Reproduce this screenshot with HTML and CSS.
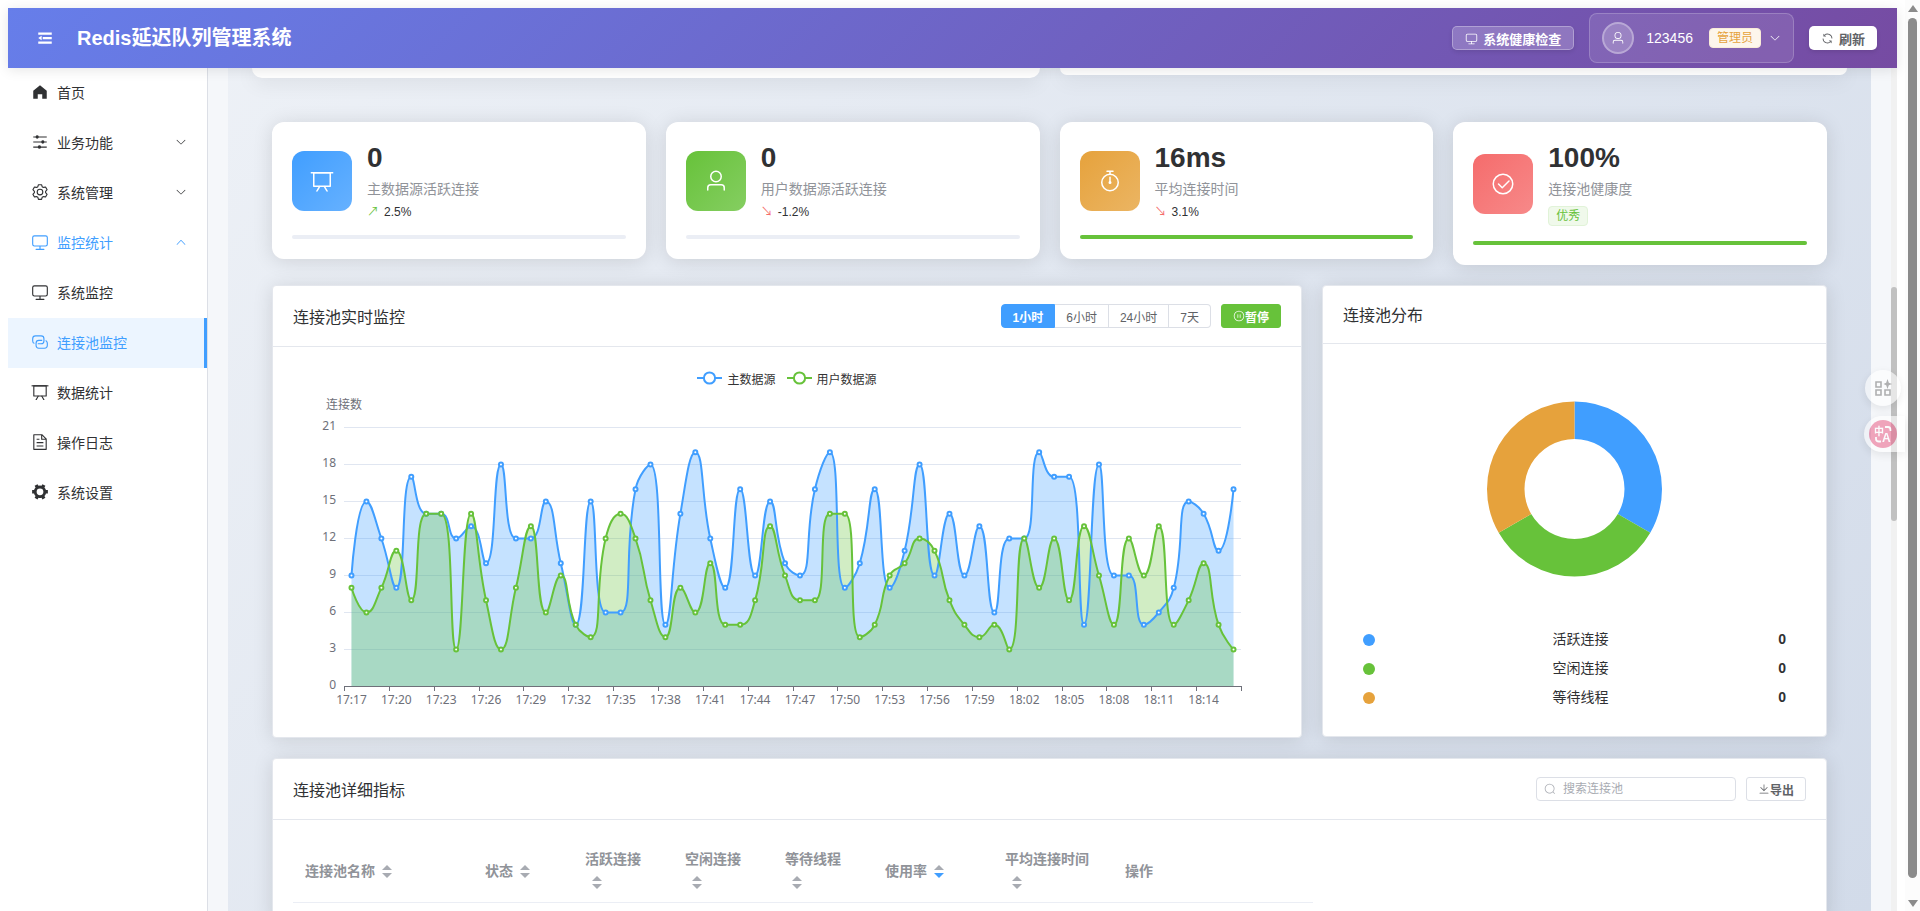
FILE: index.html
```html
<!DOCTYPE html>
<html lang="zh-CN">
<head>
<meta charset="utf-8">
<title>Redis延迟队列管理系统</title>
<link rel="stylesheet" href="styles.css">
</head>
<body>
<svg class="sprite" aria-hidden="true">
  <symbol id="i-fold" viewBox="0 0 1024 1024"><path d="M896 192H128v128h768zm0 256H384v128h512zm0 256H128v128h768zM320 384 128 512l192 128z"/></symbol>
  <symbol id="i-monitor" viewBox="0 0 1024 1024"><path d="M544 768v128h192a32 32 0 1 1 0 64H288a32 32 0 1 1 0-64h192V768H192A128 128 0 0 1 64 640V256a128 128 0 0 1 128-128h640a128 128 0 0 1 128 128v384a128 128 0 0 1-128 128H544zM192 192a64 64 0 0 0-64 64v384a64 64 0 0 0 64 64h640a64 64 0 0 0 64-64V256a64 64 0 0 0-64-64H192z"/></symbol>
  <symbol id="i-down" viewBox="0 0 1024 1024"><path d="M831.872 340.864 512 652.672 192.128 340.864a30.592 30.592 0 0 0-42.752 0 29.12 29.12 0 0 0 0 41.6L489.664 714.24a32 32 0 0 0 44.672 0l340.288-331.712a29.12 29.12 0 0 0 0-41.728 30.592 30.592 0 0 0-42.752 0z"/></symbol>
  <symbol id="i-up" viewBox="0 0 1024 1024"><path d="m488.832 344.32-339.84 356.672a32 32 0 0 0 0 44.16l.384.384a29.44 29.44 0 0 0 42.688 0l320-335.872 319.872 335.872a29.44 29.44 0 0 0 42.688 0l.384-.384a32 32 0 0 0 0-44.16L535.168 344.32a32 32 0 0 0-46.336 0z"/></symbol>
  <symbol id="i-home" viewBox="0 0 1024 1024"><path d="M512 128 128 447.936V896h255.936V640H640v256h255.936V447.936z"/></symbol>
  <symbol id="i-operation" viewBox="0 0 1024 1024"><path d="M389.44 768a96.064 96.064 0 0 1 181.12 0H896v64H570.56a96.064 96.064 0 0 1-181.12 0H128v-64h261.44zm192-288a96.064 96.064 0 0 1 181.12 0H896v64H762.56a96.064 96.064 0 0 1-181.12 0H128v-64h453.44zm-320-288a96.064 96.064 0 0 1 181.12 0H896v64H442.56a96.064 96.064 0 0 1-181.12 0H128v-64h133.44z"/></symbol>
  <symbol id="i-setting" viewBox="0 0 1024 1024"><path d="M600.704 64a32 32 0 0 1 30.464 22.208l35.2 109.376c14.784 7.232 28.928 15.36 42.432 24.512l112.384-24.192a32 32 0 0 1 34.432 15.36L944.32 364.8a32 32 0 0 1-4.032 37.504l-77.12 85.12a357.12 357.12 0 0 1 0 49.024l77.12 85.248a32 32 0 0 1 4.032 37.504l-88.704 153.6a32 32 0 0 1-34.432 15.296L708.8 803.904c-13.44 9.088-27.648 17.28-42.368 24.512l-35.264 109.376A32 32 0 0 1 600.704 960H423.296a32 32 0 0 1-30.464-22.208L357.696 828.48a351.616 351.616 0 0 1-42.56-24.64l-112.32 24.256a32 32 0 0 1-34.432-15.36L79.68 659.2a32 32 0 0 1 4.032-37.504l77.12-85.248a357.12 357.12 0 0 1 0-48.896l-77.12-85.248A32 32 0 0 1 79.68 364.8l88.704-153.6a32 32 0 0 1 34.432-15.296l112.32 24.256c13.568-9.152 27.776-17.408 42.56-24.64l35.2-109.312A32 32 0 0 1 423.232 64H600.64zm-23.424 64H446.72l-36.352 113.088-24.512 11.968a294.113 294.113 0 0 0-34.816 20.096l-22.656 15.36-116.224-25.088-65.28 113.152 79.68 88.192-1.92 27.136a293.12 293.12 0 0 0 0 40.192l1.92 27.136-79.808 88.192 65.344 113.152 116.224-25.024 22.656 15.296a294.113 294.113 0 0 0 34.816 20.096l24.512 11.968L446.72 896h130.688l36.48-113.152 24.448-11.904a288.282 288.282 0 0 0 34.752-20.096l22.592-15.296 116.288 25.024 65.28-113.152-79.744-88.192 1.92-27.136a293.12 293.12 0 0 0 0-40.256l-1.92-27.136 79.808-88.128-65.344-113.152-116.288 24.96-22.592-15.232a287.616 287.616 0 0 0-34.752-20.096l-24.448-11.904L577.344 128zM512 320a192 192 0 1 1 0 384 192 192 0 0 1 0-384zm0 64a128 128 0 1 0 0 256 128 128 0 0 0 0-256z"/></symbol>
  <symbol id="i-connection" viewBox="0 0 1024 1024"><path d="M640 384v64H448a128 128 0 0 0-128 128v128a128 128 0 0 0 128 128h320a128 128 0 0 0 128-128V576a128 128 0 0 0-64-110.848V394.88c74.56 26.368 128 97.472 128 181.056v128a192 192 0 0 1-192 192H448a192 192 0 0 1-192-192V576a192 192 0 0 1 192-192h192z"/><path d="M384 640v-64h192a128 128 0 0 0 128-128V320a128 128 0 0 0-128-128H256a128 128 0 0 0-128 128v128a128 128 0 0 0 64 110.848v70.272A192.064 192.064 0 0 1 64 448V320a192 192 0 0 1 192-192h320a192 192 0 0 1 192 192v128a192 192 0 0 1-192 192H384z"/></symbol>
  <symbol id="i-board" viewBox="0 0 1024 1024"><path d="M32 128h960v64H32z"/><path d="M192 192v512h640V192H192zm-64-64h768v608a32 32 0 0 1-32 32H160a32 32 0 0 1-32-32V128z"/><path d="M322.176 960H248.32l144.64-250.56 55.424 32L322.176 960zm453.888 0h-73.856L576 741.44l55.424-32L776.064 960z"/></symbol>
  <symbol id="i-document" viewBox="0 0 1024 1024"><path d="M832 384H576V128H192v768h640V384zm-26.496-64L640 154.496V320h165.504zM160 64h480l256 256v608a32 32 0 0 1-32 32H160a32 32 0 0 1-32-32V96a32 32 0 0 1 32-32zm160 448h384v64H320v-64zm0-192h160v64H320v-64zm0 384h384v64H320v-64z"/></symbol>
  <symbol id="i-tools" viewBox="0 0 1024 1024"><path d="M764.416 254.72a351.68 351.68 0 0 1 86.336 149.184H960v192.064H850.752a351.68 351.68 0 0 1-86.336 149.312l54.72 94.72-166.272 96-54.592-94.72a352.64 352.64 0 0 1-172.48 0L371.136 936l-166.272-96 54.72-94.72a351.68 351.68 0 0 1-86.336-149.312H64v-192h109.248a351.68 351.68 0 0 1 86.336-149.312L204.8 160l166.208-96h.192l54.656 94.592a352.64 352.64 0 0 1 172.48 0L652.8 64h.128L819.2 160l-54.72 94.72zM704 499.968a192 192 0 1 0-384 0 192 192 0 0 0 384 0z"/></symbol>
  <symbol id="i-user" viewBox="0 0 1024 1024"><path d="M512 512a192 192 0 1 0 0-384 192 192 0 0 0 0 384zm0 64a256 256 0 1 1 0-512 256 256 0 0 1 0 512zm320 320v-96a96 96 0 0 0-96-96H288a96 96 0 0 0-96 96v96a32 32 0 1 1-64 0v-96a160 160 0 0 1 160-160h448a160 160 0 0 1 160 160v96a32 32 0 1 1-64 0z"/></symbol>
  <symbol id="i-timer" viewBox="0 0 1024 1024"><path d="M512 896a320 320 0 1 0 0-640 320 320 0 0 0 0 640zm0 64a384 384 0 1 1 0-768 384 384 0 0 1 0 768z"/><path d="M512 320a32 32 0 0 1 32 32l-.512 224a32 32 0 1 1-64 0L480 352a32 32 0 0 1 32-32z"/><path d="M448 576a64 64 0 1 0 128 0 64 64 0 1 0-128 0zm96-448v128h-64V128h-96a32 32 0 0 1 0-64h256a32 32 0 1 1 0 64h-96z"/></symbol>
  <symbol id="i-check" viewBox="0 0 1024 1024"><path d="M512 896a384 384 0 1 0 0-768 384 384 0 0 0 0 768zm0 64a448 448 0 1 1 0-896 448 448 0 0 1 0 896z"/><path d="M745.344 361.344a32 32 0 0 1 45.312 45.312l-288 288a32 32 0 0 1-45.312 0l-160-160a32 32 0 1 1 45.312-45.312L480 626.752l265.344-265.408z"/></symbol>
  <symbol id="i-pause" viewBox="0 0 1024 1024"><path d="M512 64a448 448 0 1 1 0 896 448 448 0 0 1 0-896zm0 832a384 384 0 0 0 0-768 384 384 0 0 0 0 768zm-96-544q32 0 32 32v256q0 32-32 32t-32-32V384q0-32 32-32zm192 0q32 0 32 32v256q0 32-32 32t-32-32V384q0-32 32-32z"/></symbol>
  <symbol id="i-refresh" viewBox="0 0 1024 1024"><path d="M771.776 794.88A384 384 0 0 1 128 512h64a320 320 0 0 0 555.712 216.448H654.72a32 32 0 1 1 0-64h149.056a32 32 0 0 1 32 32v148.928a32 32 0 1 1-64 0v-50.56zM276.288 295.616h92.992a32 32 0 0 1 0 64H220.16a32 32 0 0 1-32-32V178.56a32 32 0 0 1 64 0v50.56A384 384 0 0 1 896.128 512h-64a320 320 0 0 0-555.776-216.384z"/></symbol>
  <symbol id="i-search" viewBox="0 0 1024 1024"><path d="m795.904 750.72 124.992 124.928a32 32 0 0 1-45.248 45.248L750.656 795.904a416 416 0 1 1 45.248-45.248zM480 832a352 352 0 1 0 0-704 352 352 0 0 0 0 704z"/></symbol>
  <symbol id="i-download" viewBox="0 0 1024 1024"><path d="M160 832h704a32 32 0 1 1 0 64H160a32 32 0 1 1 0-64zm384-253.696 236.288-236.352 45.248 45.248L508.8 704 192 387.2l45.248-45.248L480 584.704V128h64v450.304z"/></symbol>
</svg>

<div class="window">
  <div class="app">
    <header class="topbar">
      <button class="fold" type="button" aria-label="折叠菜单"><svg class="icon"><use href="#i-fold"/></svg></button>
      <h1 class="brand">Redis延迟队列管理系统</h1>
      <button class="health" type="button"><svg class="icon"><use href="#i-monitor"/></svg>系统健康检查</button>
      <button class="account" type="button">
        <span class="avatar"><svg class="icon"><use href="#i-user"/></svg></span>
        <span class="account-name">123456</span>
        <span class="role">管理员</span>
        <svg class="icon account-arrow"><use href="#i-down"/></svg>
      </button>
      <button class="refresh" type="button"><svg class="icon"><use href="#i-refresh"/></svg>刷新</button>
    </header>

    <div class="layout">
      <nav class="sidebar">
        <a class="item" href="#"><svg class="icon"><use href="#i-home"/></svg><span>首页</span></a>
        <a class="item" href="#"><svg class="icon"><use href="#i-operation"/></svg><span>业务功能</span><svg class="arrow"><use href="#i-down"/></svg></a>
        <a class="item" href="#"><svg class="icon"><use href="#i-setting"/></svg><span>系统管理</span><svg class="arrow"><use href="#i-down"/></svg></a>
        <a class="item open" href="#"><svg class="icon"><use href="#i-monitor"/></svg><span>监控统计</span><svg class="arrow"><use href="#i-up"/></svg></a>
        <a class="item" href="#"><svg class="icon"><use href="#i-monitor"/></svg><span>系统监控</span></a>
        <a class="item active" href="#"><svg class="icon"><use href="#i-connection"/></svg><span>连接池监控</span></a>
        <a class="item" href="#"><svg class="icon"><use href="#i-board"/></svg><span>数据统计</span></a>
        <a class="item" href="#"><svg class="icon"><use href="#i-document"/></svg><span>操作日志</span></a>
        <a class="item" href="#"><svg class="icon"><use href="#i-tools"/></svg><span>系统设置</span></a>
      </nav>

      <main class="main">
        <div class="dashboard">
          <div class="overview">
            <div class="overview-card tall"></div>
            <div class="overview-card"></div>
          </div>

          <section class="stats">
            <article class="stat">
              <div class="stat-row">
                <div class="stat-icon blue"><svg class="icon"><use href="#i-board"/></svg></div>
                <div class="stat-info">
                  <div class="stat-value">0</div>
                  <div class="stat-label">主数据源活跃连接</div>
                  <div class="trend"><span class="trend-arrow up">↗</span>2.5%</div>
                </div>
              </div>
              <div class="bar"><div class="bar-fill" style="width:0%"></div></div>
            </article>
            <article class="stat">
              <div class="stat-row">
                <div class="stat-icon green"><svg class="icon"><use href="#i-user"/></svg></div>
                <div class="stat-info">
                  <div class="stat-value">0</div>
                  <div class="stat-label">用户数据源活跃连接</div>
                  <div class="trend"><span class="trend-arrow fall">↘</span>-1.2%</div>
                </div>
              </div>
              <div class="bar"><div class="bar-fill" style="width:0%"></div></div>
            </article>
            <article class="stat">
              <div class="stat-row">
                <div class="stat-icon orange"><svg class="icon"><use href="#i-timer"/></svg></div>
                <div class="stat-info">
                  <div class="stat-value">16ms</div>
                  <div class="stat-label">平均连接时间</div>
                  <div class="trend"><span class="trend-arrow fall">↘</span>3.1%</div>
                </div>
              </div>
              <div class="bar"><div class="bar-fill" style="width:100%"></div></div>
            </article>
            <article class="stat">
              <div class="stat-row">
                <div class="stat-icon red"><svg class="icon"><use href="#i-check"/></svg></div>
                <div class="stat-info">
                  <div class="stat-value">100%</div>
                  <div class="stat-label">连接池健康度</div>
                  <span class="level">优秀</span>
                </div>
              </div>
              <div class="bar"><div class="bar-fill" style="width:100%"></div></div>
            </article>
          </section>

          <section class="charts">
            <article class="card">
              <div class="card-head">
                <h2 class="card-title">连接池实时监控</h2>
                <div class="ranges">
                  <button class="range on" type="button">1小时</button>
                  <button class="range" type="button">6小时</button>
                  <button class="range" type="button">24小时</button>
                  <button class="range" type="button">7天</button>
                </div>
                <button class="pause" type="button"><svg class="icon"><use href="#i-pause"/></svg>暂停</button>
              </div>
              <div class="card-body">
                <div class="legend">
                  <span class="legend-item"><svg class="legend-mark main-source" viewBox="0 0 25 14"><path d="M0 7h25"/><circle cx="12.5" cy="7" r="5.6"/></svg>主数据源</span>
                  <span class="legend-item"><svg class="legend-mark user-source" viewBox="0 0 25 14"><path d="M0 7h25"/><circle cx="12.5" cy="7" r="5.6"/></svg>用户数据源</span>
                </div>
                <svg class="line-chart" id="lineChart" role="img" aria-label="连接数趋势"></svg>
              </div>
            </article>

            <article class="card">
              <div class="card-head">
                <h2 class="card-title">连接池分布</h2>
              </div>
              <div class="card-body">
                <svg class="donut" viewBox="-125 -125 250 250" role="img" aria-label="连接池分布">
                  <path fill="#409eff" d="M0-87.5A87.5 87.5 0 0 1 75.78 43.75L43.3 25A50 50 0 0 0 0-50z"/>
                  <path fill="#67c23a" d="M75.78 43.75A87.5 87.5 0 0 1-75.78 43.75L-43.3 25A50 50 0 0 0 43.3 25z"/>
                  <path fill="#e6a23c" d="M-75.78 43.75A87.5 87.5 0 0 1 0-87.5V-50A50 50 0 0 0-43.3 25z"/>
                </svg>
                <ul class="shares">
                  <li class="share"><span class="dot blue-dot"></span><span>活跃连接</span><b>0</b></li>
                  <li class="share"><span class="dot green-dot"></span><span>空闲连接</span><b>0</b></li>
                  <li class="share"><span class="dot orange-dot"></span><span>等待线程</span><b>0</b></li>
                </ul>
              </div>
            </article>
          </section>

          <section class="details">
            <article class="card">
              <div class="card-head">
                <h2 class="card-title">连接池详细指标</h2>
                <label class="search">
                  <svg class="icon"><use href="#i-search"/></svg>
                  <input type="text" placeholder="搜索连接池" aria-label="搜索连接池">
                </label>
                <button class="export" type="button"><svg class="icon"><use href="#i-download"/></svg>导出</button>
              </div>
              <div class="card-body">
                <table class="metrics">
                  <colgroup><col class="w180"><col class="w100"><col class="w100"><col class="w100"><col class="w100"><col class="w120"><col class="w120"><col class="w200"></colgroup>
                  <thead>
                    <tr>
                      <th>连接池名称<span class="caret"></span></th>
                      <th>状态<span class="caret"></span></th>
                      <th>活跃连接<span class="caret"></span></th>
                      <th>空闲连接<span class="caret"></span></th>
                      <th>等待线程<span class="caret"></span></th>
                      <th>使用率<span class="caret desc"></span></th>
                      <th>平均连接时间<span class="caret"></span></th>
                      <th>操作</th>
                    </tr>
                  </thead>
                </table>
              </div>
            </article>
          </section>
        </div>
      </main>
      <div class="inner-scroll"><div class="inner-thumb"></div></div>
    </div>
  </div>

  <div class="page-scroll">
    <span class="scroll-up"></span>
    <span class="scroll-thumb"></span>
    <span class="scroll-down"></span>
  </div>
</div>

<div class="floats">
  <button class="float-btn" type="button" aria-label="工具">
    <svg class="float-grid" viewBox="0 0 18 18"><path d="M2 3h5v5H2zM2 11h5v5H2zM11 11h5v5h-5z" fill="none" stroke="#808080" stroke-width="1.600"/><path d="M13.500 0 14.800 3.700 18 5 14.800 6.300 13.500 10 12.200 6.300 9.500 5 12.200 3.700z" fill="#808080"/></svg>
  </button>
  <button class="float-tab" type="button" aria-label="翻译">
    <svg class="float-lang" viewBox="0 0 28 28"><circle cx="14" cy="14" r="14" fill="#ec6d92"/><g fill="none" stroke="#fff" stroke-width="1.800"><path d="M16 7h3q2.500 0 2.500 3v1M7 17v2q0 2.500 3 2.500h2"/></g><text x="5" y="15" font-size="10">中</text><text x="13" y="22" font-size="12">A</text></svg>
  </button>
</div>
<script src="chart.js"></script>
</body>
</html>
```
FILE: styles.css
```css
* { box-sizing: border-box; }

body {
  margin: 0;
  background: #fff;
  color: #303133;
  font-family: "Liberation Sans", "Noto Sans CJK SC", sans-serif;
  font-size: 14px;
  overflow: hidden;
}

button, input { font-family: inherit; }
button { cursor: pointer; }
h1, h2, ul { margin: 0; padding: 0; font-weight: 400; }

.sprite { display: none; }
.icon { width: 1em; height: 1em; fill: currentColor; flex: none; }

.window { display: flex; height: 100vh; }

.app {
  flex: 1;
  min-width: 0;
  margin: 8px 8px 0;
  display: flex;
  flex-direction: column;
}

/* Top bar */
.topbar {
  position: relative;
  z-index: 2;
  flex: none;
  height: 60px;
  padding: 0 20px 0 28px;
  display: flex;
  align-items: center;
  color: #fff;
  background: linear-gradient(135deg, #667eea 0%, #764ba2 100%);
  box-shadow: 0 2px 12px rgba(0, 0, 0, .1);
}

.fold {
  display: flex;
  padding: 0;
  border: 0;
  background: none;
  color: #fff;
  font-size: 18px;
  margin-right: 23px;
}

.brand {
  flex: 1;
  font-size: 20px;
  line-height: 28px;
  font-weight: 700;
}

.health, .refresh {
  height: 24px;
  display: flex;
  align-items: center;
  gap: 5px;
  border-radius: 5px;
  font-size: 13px;
  box-shadow: 0 2px 4px rgba(0, 0, 0, .1);
}

.health {
  padding: 0 12px;
  border: 1px solid rgba(255, 255, 255, .3);
  background: rgba(255, 255, 255, .2);
  color: #fff;
  font-weight: 600;
  margin-right: 15px;
}

.refresh {
  padding: 0 12px;
  border: 0;
  background: #fff;
  color: #606266;
  font-weight: 600;
}

.account {
  height: 50px;
  padding: 0 12px;
  display: flex;
  align-items: center;
  border: 1px solid rgba(255, 255, 255, .2);
  border-radius: 8px;
  background: rgba(255, 255, 255, .1);
  color: #fff;
  margin-right: 15px;
}

.avatar {
  width: 32px;
  height: 32px;
  display: grid;
  place-items: center;
  border: 2px solid rgba(255, 255, 255, .3);
  border-radius: 50%;
  background: rgba(255, 255, 255, .2);
  font-size: 14px;
}

.account-name { margin: 0 16px 0 12px; font-size: 14px; }

.role, .level {
  display: inline-block;
  height: 20px;
  padding: 0 7px;
  border: 1px solid;
  border-radius: 4px;
  font-size: 12px;
  line-height: 18px;
}

.role { color: #e6a23c; background: #fdf6ec; border-color: #faecd8; }
.level { color: #67c23a; background: #f0f9eb; border-color: #e1f3d8; margin-top: 2px; vertical-align: top; }
.account-arrow { font-size: 12px; margin-left: 8px; }

/* Side menu */
.layout { flex: 1; min-height: 0; display: flex; }

.sidebar {
  flex: none;
  width: 200px;
  border-right: 1px solid #dcdfe6;
  background: #fff;
}

.item {
  height: 50px;
  padding: 0 20px 2px;
  display: flex;
  align-items: center;
  color: #303133;
  text-decoration: none;
}

.item .icon { width: 24px; height: 18px; margin-right: 5px; }
.item .arrow { width: 12px; height: 12px; margin-left: auto; fill: currentColor; }
.item.open, .item.active { color: #409eff; }
.item.active { background: #ecf5ff; border-right: 3px solid #409eff; }

/* Content */
.main {
  flex: 1;
  min-width: 0;
  padding: 0 20px;
  background: #f5f7fa;
  overflow: hidden;
}

.dashboard {
  min-height: 100%;
  padding: 0 24px;
  background: linear-gradient(135deg, #f5f7fa 0%, #c3cfe2 100%) 0 -769px / 100% 3000px;
}

.overview {
  display: grid;
  grid-template-columns: 1fr 1fr;
  align-items: start;
  gap: 20px;
}

.overview-card {
  height: 7px;
  border-radius: 0 0 12px 12px;
  background: #fff;
  box-shadow: 0 4px 20px rgba(0, 0, 0, .1);
}

.overview-card.tall { height: 10px; }

.stats {
  display: grid;
  grid-template-columns: repeat(4, 1fr);
  align-items: start;
  gap: 20px;
  padding: 44px 20px 20px;
}

.stat {
  padding: 20px;
  border-radius: 12px;
  background: #fff;
  box-shadow: 0 2px 20px rgba(0, 0, 0, .12);
}

.stat-row { display: flex; align-items: center; gap: 15px; margin-bottom: 15px; }

.stat-icon {
  width: 60px;
  height: 60px;
  display: grid;
  place-items: center;
  border-radius: 12px;
  color: #fff;
  font-size: 24px;
}

.stat-icon.blue { background: linear-gradient(135deg, #409eff, #66b1ff); }
.stat-icon.green { background: linear-gradient(135deg, #67c23a, #85ce61); }
.stat-icon.orange { background: linear-gradient(135deg, #e6a23c, #ebb563); }
.stat-icon.red { background: linear-gradient(135deg, #f56c6c, #f78989); }

.stat-value { font-size: 28px; line-height: 32px; font-weight: 700; margin-bottom: 6px; }
.stat-label { font-size: 14px; line-height: 18px; color: #909399; margin-bottom: 6px; }
.trend { display: flex; gap: 5px; font-size: 12px; line-height: 16px; }
.trend-arrow { width: 12px; overflow: hidden; text-align: center; }
.trend-arrow.up { color: #67c23a; }
.trend-arrow.fall { color: #f56c6c; }

.bar { height: 4px; border-radius: 2px; background: #ebeef5; }
.bar-fill { height: 100%; border-radius: 2px; background: #67c23a; }

.charts {
  display: grid;
  grid-template-columns: minmax(0, 1030fr) minmax(0, 505fr);
  align-items: start;
  gap: 20px;
  padding: 0 20px 20px;
}

.details { padding: 0 20px; }

.card {
  border: 1px solid #e4e7ed;
  border-radius: 4px;
  background: #fff;
  box-shadow: 0 2px 20px rgba(0, 0, 0, .12);
}

.card-head {
  display: flex;
  align-items: center;
  padding: 18px 20px;
  border-bottom: 1px solid #e4e7ed;
}

.card-title { flex: 1; font-size: 16px; line-height: 19px; padding-top: 2px; }
.card-body { padding: 20px; }

.ranges { display: flex; margin-right: 10px; }

.range {
  height: 24px;
  padding: 0 11px;
  border: 1px solid #dcdfe6;
  border-left-width: 0;
  background: #fff;
  color: #606266;
  font-size: 12px;
}

.range.on { background: #409eff; border-color: #409eff; border-left-width: 1px; color: #fff; font-weight: 600; border-radius: 4px 0 0 4px; }
.range:last-child { border-radius: 0 4px 4px 0; }

.pause, .export {
  height: 24px;
  padding: 0 11px;
  display: flex;
  align-items: center;
  border: 1px solid #dcdfe6;
  border-radius: 3px;
  background: #fff;
  color: #606266;
  font-size: 12px;
  font-weight: 600;
}

.pause { background: #67c23a; border-color: #67c23a; color: #fff; }

.legend {
  height: 22px;
  display: flex;
  align-items: center;
  justify-content: center;
  gap: 11px;
  font-size: 12px;
  color: #333;
}

.legend-item { display: flex; align-items: center; gap: 5px; }
.legend-mark { width: 25px; height: 14px; fill: #fff; stroke-width: 2; }
.main-source { stroke: #409eff; }
.user-source { stroke: #67c23a; }

.line-chart {
  display: block;
  width: 100%;
  height: 328px;
  font-family: "Noto Sans", "Noto Sans CJK SC", sans-serif;
  font-size: 12px;
}

.donut { display: block; width: 100%; height: 250px; }

.shares { list-style: none; margin-top: 15px; padding: 0 20px; }

.share {
  display: flex;
  align-items: center;
  justify-content: space-between;
  line-height: 21px;
  margin-bottom: 8px;
}

.dot { width: 12px; height: 12px; border-radius: 50%; margin-right: 8px; }
.blue-dot { background: #409eff; }
.green-dot { background: #67c23a; }
.orange-dot { background: #e6a23c; }

.search {
  width: 200px;
  height: 24px;
  padding: 0 7px;
  margin-right: 10px;
  display: flex;
  align-items: center;
  gap: 7px;
  border: 1px solid #dcdfe6;
  border-radius: 4px;
  color: #a8abb2;
  font-size: 12px;
}

.search input {
  flex: 1;
  min-width: 0;
  padding: 0;
  border: 0;
  outline: 0;
  font-size: 12px;
}

.search input::placeholder { color: #a8abb2; }

/* Metrics table */
.metrics { width: 1020px; table-layout: fixed; border-collapse: collapse; }
.w100 { width: 100px; }
.w120 { width: 120px; }
.w180 { width: 180px; }
.w200 { width: 200px; }

.metrics th {
  padding: 8px 12px;
  border-bottom: 1px solid #ebeef5;
  color: #909399;
  font-weight: 600;
  line-height: 23px;
  text-align: left;
}

.caret {
  width: 24px;
  height: 14px;
  padding-bottom: 1px;
  display: inline-flex;
  flex-direction: column;
  align-items: center;
  justify-content: space-between;
  vertical-align: middle;
}

.caret::before, .caret::after {
  content: "";
  border: 5px solid transparent;
}

.caret::before { border-top-width: 0; border-bottom-color: #a8abb2; }
.caret::after { border-bottom-width: 0; border-top-color: #a8abb2; }
.caret.desc::after { border-top-color: #409eff; }

/* Scroll bars */
.inner-scroll { flex: none; width: 6px; padding-top: 219px; background: #f1f1f1; }
.inner-thumb { height: 234px; border-radius: 3px; background: #c1c1c1; }

.page-scroll {
  flex: none;
  width: 15px;
  padding: 5px 0 4px;
  display: flex;
  flex-direction: column;
  align-items: center;
  background: #fcfcfc;
}

.scroll-up, .scroll-down { border: 5px solid transparent; }
.scroll-up { border-top-width: 0; border-bottom: 7px solid #8b8b8b; }
.scroll-down { border-bottom-width: 0; border-top: 7px solid #8b8b8b; }
.scroll-thumb { flex: 1; width: 9px; margin: 6px 0 22px; border-radius: 5px; background: #8b8b8b; }

/* Floating shortcuts */
.floats {
  position: fixed;
  z-index: 3;
  top: 370px;
  right: 15px;
  display: flex;
  flex-direction: column;
  align-items: flex-end;
  gap: 10px;
  opacity: .6;
}

.float-btn, .float-tab {
  height: 36px;
  padding: 0;
  display: flex;
  align-items: center;
  border: 0;
  background: #fff;
  box-shadow: 0 3px 10px rgba(0, 0, 0, .14);
}

.float-btn { width: 36px; justify-content: center; margin-right: 4px; border-radius: 50%; }
.float-tab { width: 41px; padding-left: 5px; border-radius: 18px 0 0 18px; }
.float-grid { width: 18px; height: 18px; }
.float-lang { width: 28px; height: 28px; fill: #fff; font-weight: 700; }
```
FILE: chart.js
```js
(function () {
  var svg = document.getElementById('lineChart');
  var main = [9,15,12,8,17,14,14,12,13,10,18,12,12,15,10,5,15,6,6,16,18,5,14,19,12,8,16,9,15,10,
    9,16,19,8,10,16,8,11,18,9,14,9,13,6,12,12,19,17,17,5,18,9,9,5,6,8,15,14,11,16];
  var user = [8,6,8,11,7,14,14,3,14,7,3,8,13,6,9,5,4,12,14,12,7,4,8,6,10,5,5,7,13,9,
    7,7,14,14,4,5,9,10,12,11,7,5,4,5,3,12,8,12,7,13,9,5,12,9,13,5,7,10,5,3];
  var max = 21, step = 3, startMinute = 17 * 60 + 17;
  var grid = { left: 51, right: 40, top: 38, bottom: 31 };

  function clamp(v, a, b) {
    return Math.max(Math.min(v, Math.max(a, b)), Math.min(a, b));
  }

  // Smooth curve whose control points stay between neighbouring points.
  function curve(p) {
    var d = 'M' + p[0], c0 = p[0];
    for (var i = 1; i < p.length; i++) {
      var a = p[i - 1], b = p[i], n = p[i + 1], c1 = b, next = b;
      if (n) {
        var l0 = Math.hypot(b[0] - a[0], b[1] - a[1]);
        var l1 = Math.hypot(n[0] - b[0], n[1] - b[1]);
        var r = l1 / (l0 + l1);
        c1 = [0, 0];
        next = [0, 0];
        for (var k = 0; k < 2; k++) {
          var q = clamp(b[k] + (n[k] - a[k]) * 0.5 * r, n[k], b[k]);
          c1[k] = clamp(b[k] - (q - b[k]) * l0 / l1, a[k], b[k]);
          next[k] = b[k] + (b[k] - c1[k]) * l1 / l0;
        }
      }
      d += 'C' + c0 + ' ' + c1 + ' ' + b;
      c0 = next;
    }
    return d;
  }

  function draw() {
    var w = svg.clientWidth, h = svg.clientHeight;
    var x0 = grid.left, x1 = w - grid.right, y0 = grid.top, y1 = h - grid.bottom;
    var band = (x1 - x0) / main.length;
    var y = function (v) { return y1 - v / max * (y1 - y0); };
    var out = '<text x="' + x0 + '" y="20" text-anchor="middle" fill="#6e7079">连接数</text>';

    for (var v = 0; v <= max; v += step) {
      var ly = Math.round(y(v)) + 0.5;
      if (v) out += '<path d="M' + x0 + ' ' + ly + 'H' + x1 + '" stroke="#e0e6f1"/>';
      out += '<text x="' + (x0 - 8) + '" y="' + (Math.round(y(v)) + 3) + '" text-anchor="end" fill="#6e7079">' + v + '</text>';
    }

    var areas = '', lines = '', dots = '';
    [[main, '#409eff'], [user, '#67c23a']].forEach(function (s) {
      var p = s[0].map(function (n, i) { return [x0 + band * (i + 0.5), y(n) + 0.5]; });
      var d = curve(p);
      areas += '<path d="' + d + 'V' + y1 + 'H' + p[0][0] + 'z" fill="' + s[1] + '" fill-opacity=".3"/>';
      lines += '<path d="' + d + '" fill="none" stroke="' + s[1] + '" stroke-width="2" stroke-linejoin="bevel"/>';
      p.forEach(function (c) {
        dots += '<circle cx="' + c[0] + '" cy="' + c[1] + '" r="2" fill="#fff" stroke="' + s[1] + '" stroke-width="2"/>';
      });
    });
    out += areas + lines + dots;

    var axis = 'M' + x0 + ' ' + (y1 + 0.5) + 'H' + x1;
    for (var i = 0; i <= main.length; i += step) {
      var tx = Math.round(x0 + band * i) + 0.5;
      axis += 'M' + tx + ' ' + y1 + 'v5';
      if (i < main.length) {
        var t = startMinute + i;
        var label = Math.floor(t / 60) + ':' + String(t % 60).padStart(2, '0');
        out += '<text x="' + (x0 + band * (i + 0.5)) + '" y="' + (y1 + 18) + '" text-anchor="middle" fill="#6e7079">' + label + '</text>';
      }
    }
    svg.innerHTML = out + '<path d="' + axis + '" stroke="#6e7079" fill="none"/>';
  }

  draw();
  window.addEventListener('resize', draw);
})();
```
